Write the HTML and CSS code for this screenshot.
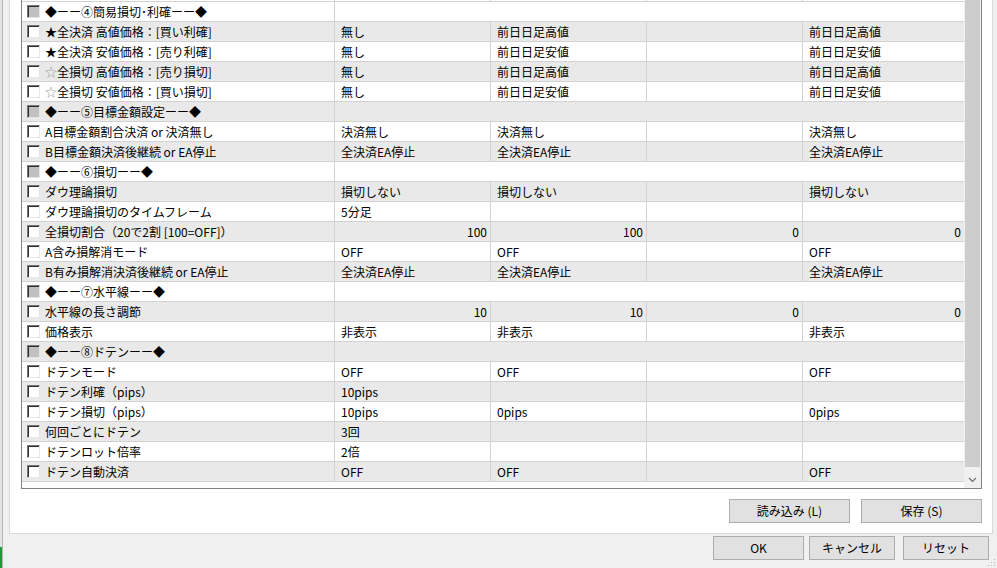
FILE: index.html
```html
<!DOCTYPE html>
<html lang="ja">
<head>
<meta charset="utf-8">
<title>パラメーター</title>
<link rel="stylesheet" href="styles.css">
</head>
<body>
<div class="window">
  <div class="edge"><div class="edge-fill"></div><div class="edge-green"></div></div>
  <div class="main">
    <div class="panel">
      <div class="list">
        <div class="rows">
          <div class="row stub"><div class="c"></div><div class="c"></div><div class="c"></div><div class="c"></div><div class="c last"></div></div>

          <div class="row sec"><div class="c first"><span class="cb cb-sec"></span><span class="lbl">◆ーー④簡易損切･利確ーー◆</span></div><div class="c span"></div></div>
          <div class="row g"><div class="c first"><span class="cb"></span><span class="lbl">★全決済 高値価格：[買い利確]</span></div><div class="c">無し</div><div class="c">前日日足高値</div><div class="c"></div><div class="c last">前日日足高値</div></div>
          <div class="row"><div class="c first"><span class="cb"></span><span class="lbl">★全決済 安値価格：[売り利確]</span></div><div class="c">無し</div><div class="c">前日日足安値</div><div class="c"></div><div class="c last">前日日足安値</div></div>
          <div class="row g"><div class="c first"><span class="cb"></span><span class="lbl"><span class="star">☆</span>全損切 高値価格：[売り損切]</span></div><div class="c">無し</div><div class="c">前日日足高値</div><div class="c"></div><div class="c last">前日日足高値</div></div>
          <div class="row"><div class="c first"><span class="cb"></span><span class="lbl"><span class="star">☆</span>全損切 安値価格：[買い損切]</span></div><div class="c">無し</div><div class="c">前日日足安値</div><div class="c"></div><div class="c last">前日日足安値</div></div>

          <div class="row sec g"><div class="c first"><span class="cb cb-sec"></span><span class="lbl">◆ーー⑤目標金額設定ーー◆</span></div><div class="c span"></div></div>
          <div class="row"><div class="c first"><span class="cb"></span><span class="lbl">A目標金額割合決済 or 決済無し</span></div><div class="c">決済無し</div><div class="c">決済無し</div><div class="c"></div><div class="c last">決済無し</div></div>
          <div class="row g"><div class="c first"><span class="cb"></span><span class="lbl">B目標金額決済後継続 or EA停止</span></div><div class="c">全決済EA停止</div><div class="c">全決済EA停止</div><div class="c"></div><div class="c last">全決済EA停止</div></div>

          <div class="row sec"><div class="c first"><span class="cb cb-sec"></span><span class="lbl">◆ーー⑥損切ーー◆</span></div><div class="c span"></div></div>
          <div class="row g"><div class="c first"><span class="cb"></span><span class="lbl">ダウ理論損切</span></div><div class="c">損切しない</div><div class="c">損切しない</div><div class="c"></div><div class="c last">損切しない</div></div>
          <div class="row"><div class="c first"><span class="cb"></span><span class="lbl">ダウ理論損切のタイムフレーム</span></div><div class="c">5分足</div><div class="c"></div><div class="c"></div><div class="c last"></div></div>
          <div class="row g"><div class="c first"><span class="cb"></span><span class="lbl">全損切割合（20で2割 [100=OFF]）</span></div><div class="c num">100</div><div class="c num">100</div><div class="c num">0</div><div class="c last num">0</div></div>
          <div class="row"><div class="c first"><span class="cb"></span><span class="lbl">A含み損解消モード</span></div><div class="c">OFF</div><div class="c">OFF</div><div class="c"></div><div class="c last">OFF</div></div>
          <div class="row g"><div class="c first"><span class="cb"></span><span class="lbl">B有み損解消決済後継続 or EA停止</span></div><div class="c">全決済EA停止</div><div class="c">全決済EA停止</div><div class="c"></div><div class="c last">全決済EA停止</div></div>

          <div class="row sec"><div class="c first"><span class="cb cb-sec"></span><span class="lbl">◆ーー⑦水平線ーー◆</span></div><div class="c span"></div></div>
          <div class="row g"><div class="c first"><span class="cb"></span><span class="lbl">水平線の長さ調節</span></div><div class="c num">10</div><div class="c num">10</div><div class="c num">0</div><div class="c last num">0</div></div>
          <div class="row"><div class="c first"><span class="cb"></span><span class="lbl">価格表示</span></div><div class="c">非表示</div><div class="c">非表示</div><div class="c"></div><div class="c last">非表示</div></div>

          <div class="row sec g"><div class="c first"><span class="cb cb-sec"></span><span class="lbl">◆ーー⑧ドテンーー◆</span></div><div class="c span"></div></div>
          <div class="row"><div class="c first"><span class="cb"></span><span class="lbl">ドテンモード</span></div><div class="c">OFF</div><div class="c">OFF</div><div class="c"></div><div class="c last">OFF</div></div>
          <div class="row g"><div class="c first"><span class="cb"></span><span class="lbl">ドテン利確（pips）</span></div><div class="c">10pips</div><div class="c"></div><div class="c"></div><div class="c last"></div></div>
          <div class="row"><div class="c first"><span class="cb"></span><span class="lbl">ドテン損切（pips）</span></div><div class="c">10pips</div><div class="c">0pips</div><div class="c"></div><div class="c last">0pips</div></div>
          <div class="row g"><div class="c first"><span class="cb"></span><span class="lbl">何回ごとにドテン</span></div><div class="c">3回</div><div class="c"></div><div class="c"></div><div class="c last"></div></div>
          <div class="row"><div class="c first"><span class="cb"></span><span class="lbl">ドテンロット倍率</span></div><div class="c">2倍</div><div class="c"></div><div class="c"></div><div class="c last"></div></div>
          <div class="row g"><div class="c first"><span class="cb"></span><span class="lbl">ドテン自動決済</span></div><div class="c">OFF</div><div class="c">OFF</div><div class="c"></div><div class="c last">OFF</div></div>
        </div>
        <div class="vscroll">
          <div class="thumb"></div>
          <div class="track"></div>
          <div class="arrow">
            <svg width="9" height="6" viewBox="0 0 9 6"><path d="M1 1 L4.5 4.5 L8 1" fill="none" stroke="#707070" stroke-width="1.2"/></svg>
          </div>
        </div>
      </div>
      <div class="panel-buttons">
        <button class="btn btn-wide">読み込み (L)</button>
        <button class="btn btn-wide">保存 (S)</button>
      </div>
    </div>
    <div class="footer">
      <button class="btn btn-ok">OK</button>
      <button class="btn btn-cancel">キャンセル</button>
      <button class="btn btn-reset">リセット</button>
    </div>
  </div>
</div>
<svg class="grip" width="8" height="8" viewBox="0 0 8 8">
  <rect x="6" y="0" width="1" height="1" fill="#b8b8b8"/>
  <rect x="3" y="3" width="1" height="1" fill="#b8b8b8"/>
  <rect x="6" y="3" width="1" height="1" fill="#b8b8b8"/>
  <rect x="0" y="6" width="1" height="1" fill="#b8b8b8"/>
  <rect x="3" y="6" width="1" height="1" fill="#b8b8b8"/>
  <rect x="6" y="6" width="1" height="1" fill="#b8b8b8"/>
</svg>
</body>
</html>
```
FILE: styles.css
```css
* { box-sizing: border-box; }

html, body {
  margin: 0;
  padding: 0;
}

body {
  width: 997px;
  height: 568px;
  overflow: hidden;
  background: #f0f0f0;
  font-family: "Noto Sans CJK JP", "Noto Sans", sans-serif;
  font-size: 12px;
  color: #000;
  position: relative;
}

.window {
  display: flex;
  height: 568px;
}

.edge {
  width: 3px;
  display: flex;
  flex-direction: column;
  border-right: 1px solid #b4b4b4;
  background: #e4e4e4;
}

.edge-fill { flex: 1; }

.edge-green {
  height: 21px;
  background: #1f9a3a;
}

.main {
  flex: 1;
  padding-left: 6px;
  padding-right: 4px;
  display: flex;
  flex-direction: column;
}

.panel {
  height: 534px;
  background: #fff;
  border-left: 1px solid #dadada;
  border-right: 1px solid #dadada;
  border-bottom: 1px solid #dadada;
  padding-left: 11px;
  padding-right: 10px;
  display: flex;
  flex-direction: column;
}

.list {
  width: 961px;
  height: 489px;
  border-left: 1px solid #828282;
  border-right: 1px solid #828282;
  border-bottom: 1px solid #828282;
  display: flex;
  background: #fff;
}

.rows {
  width: 942px;
  height: 488px;
}

.row {
  display: grid;
  grid-template-columns: 313px 156px 156px 156px 161px;
  height: 20px;
}

.row.g { background: #e9e9e9; }

.row.stub { height: 2px; }

.c {
  border-right: 1px solid #d2d2d2;
  border-bottom: 1px solid #d2d2d2;
  padding-left: 6px;
  line-height: 19px;
  white-space: nowrap;
  overflow: hidden;
}

.c.last { border-right: none; }

.c.num {
  text-align: right;
  padding-right: 3px;
}

.c.span {
  grid-column: span 4;
  border-right: none;
}

.c.first {
  display: flex;
  align-items: center;
  padding-left: 5px;
}

.cb {
  width: 13px;
  height: 13px;
  flex: none;
  background: #fff;
  border-top: 1px solid #7a7a7a;
  border-left: 1px solid #7a7a7a;
  border-right: 1px solid #e6e6e6;
  border-bottom: 1px solid #e6e6e6;
  box-shadow: inset 1px 1px 0 #2e2e2e;
  margin-right: 5px;
}

.cb.cb-sec { background: #c0c0c0; }

.lbl { line-height: 19px; }

.star { color: #9a9a9a; }

.vscroll {
  width: 17px;
  height: 488px;
  background: #f0f0f0;
  display: flex;
  flex-direction: column;
}

.thumb {
  height: 467px;
  margin: 0 1px 0 1px;
  background: #cdcdcd;
}

.track { flex: 1; }

.arrow {
  height: 17px;
  display: flex;
  align-items: center;
  justify-content: center;
}

.panel-buttons {
  display: flex;
  justify-content: flex-end;
  gap: 11px;
  margin-top: 10px;
  padding-right: 0;
}

.btn {
  font-family: "Noto Sans CJK JP", "Noto Sans", sans-serif;
  font-size: 12px;
  color: #000;
  background: #e1e1e1;
  border: 1px solid #adadad;
  padding: 0;
  height: 24px;
  line-height: 22px;
  text-align: center;
}

.btn-wide { width: 121px; }

.footer {
  display: flex;
  justify-content: flex-end;
  padding-top: 2px;
  padding-right: 4px;
}

.btn-ok { width: 91px; margin-right: 5px; }
.btn-cancel { width: 86px; margin-right: 8px; }
.btn-reset { width: 86px; }

.grip {
  position: absolute;
  right: 1px;
  bottom: 1px;
}
```
